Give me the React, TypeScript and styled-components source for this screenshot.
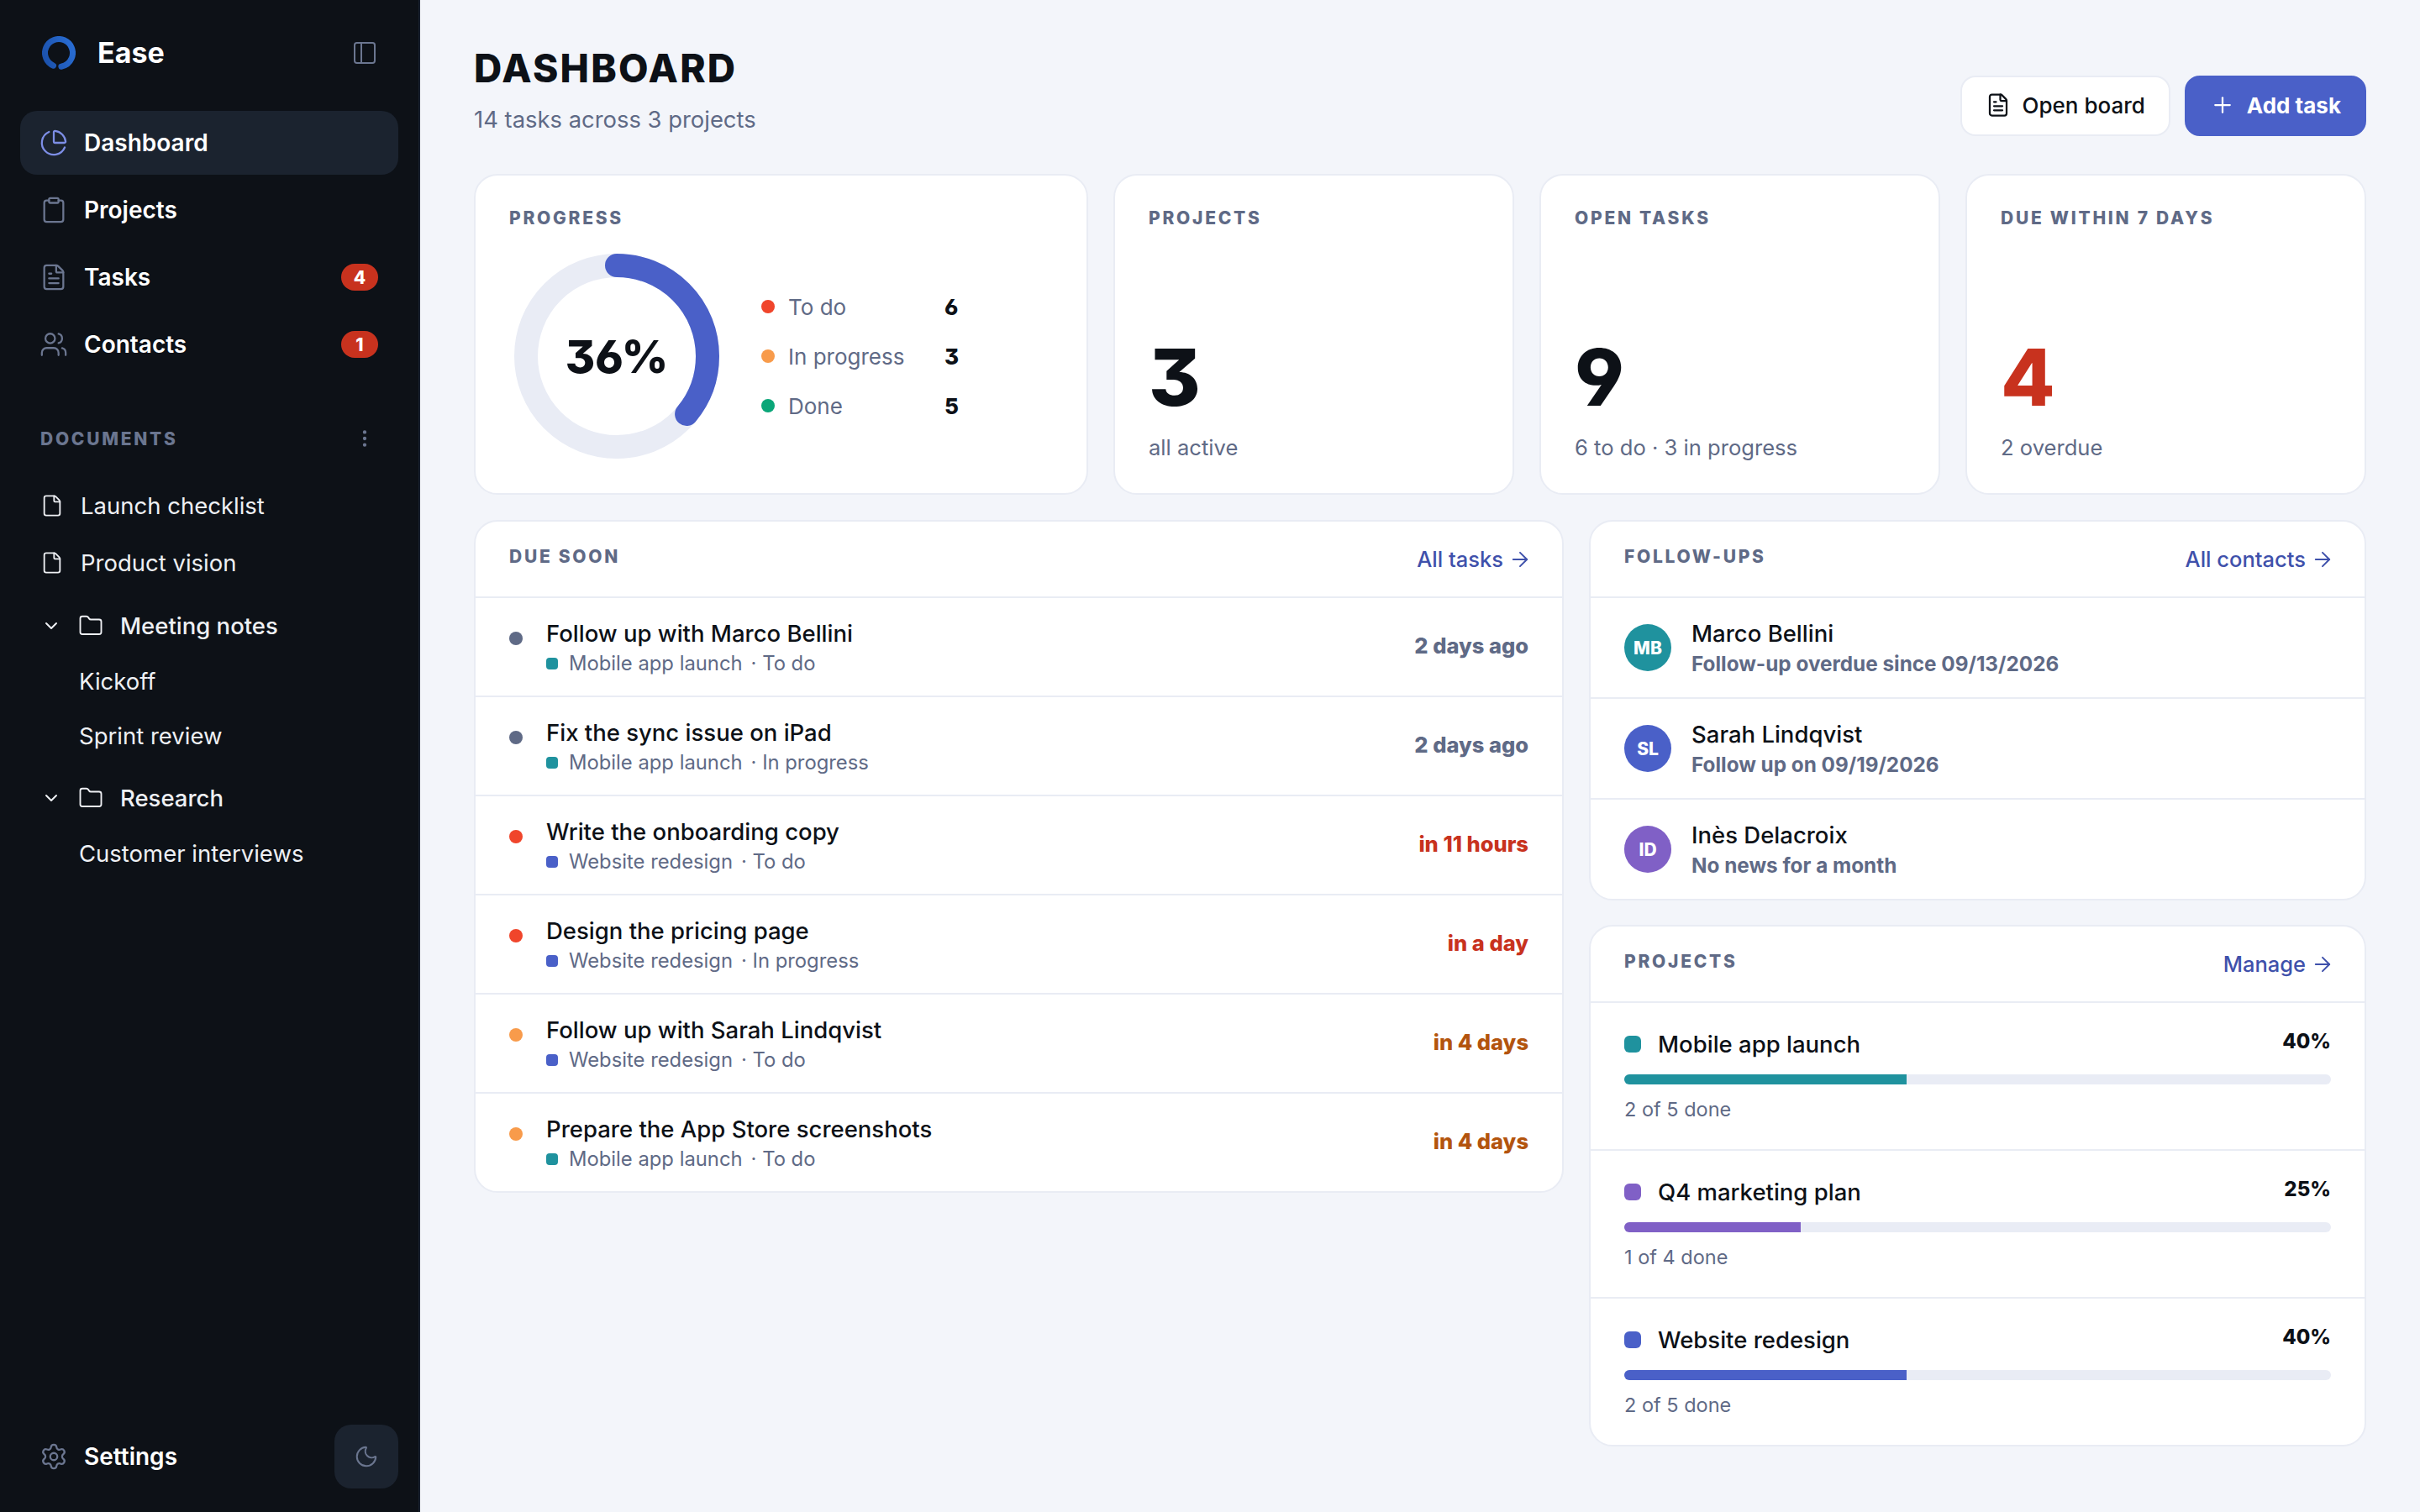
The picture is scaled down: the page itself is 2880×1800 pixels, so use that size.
import styled, { createGlobalStyle } from "styled-components"
import {
    ArrowRight,
    ChartPie,
    ChevronDown,
    Clipboard,
    EllipsisVertical,
    File,
    FileText,
    Folder,
    Moon,
    PanelLeft,
    Plus,
    Settings,
    Users,
} from "lucide-react"

const teal = "#1f929e"
const blue = "#4a60c8"
const purple = "#8060c6"
const red = "#c8321e"
const orange = "#b3540e"
const muted = "#5f6a86"
const ink = "#0d1117"
const line = "#e9ecf4"

const tasks = [
    { title: "Follow up with Marco Bellini", project: "Mobile app launch", color: teal, status: "To do", due: "2 days ago", dot: "#5f6a86", dueColor: muted },
    { title: "Fix the sync issue on iPad", project: "Mobile app launch", color: teal, status: "In progress", due: "2 days ago", dot: "#5f6a86", dueColor: muted },
    { title: "Write the onboarding copy", project: "Website redesign", color: blue, status: "To do", due: "in 11 hours", dot: "#f0452b", dueColor: red },
    { title: "Design the pricing page", project: "Website redesign", color: blue, status: "In progress", due: "in a day", dot: "#f0452b", dueColor: red },
    { title: "Follow up with Sarah Lindqvist", project: "Website redesign", color: blue, status: "To do", due: "in 4 days", dot: "#f89b4b", dueColor: orange },
    { title: "Prepare the App Store screenshots", project: "Mobile app launch", color: teal, status: "To do", due: "in 4 days", dot: "#f89b4b", dueColor: orange },
]

const contacts = [
    { initials: "MB", name: "Marco Bellini", note: "Follow-up overdue since 09/13/2026", color: teal },
    { initials: "SL", name: "Sarah Lindqvist", note: "Follow up on 09/19/2026", color: blue },
    { initials: "ID", name: "Inès Delacroix", note: "No news for a month", color: purple },
]

const projects = [
    { name: "Mobile app launch", pct: 40, done: "2 of 5 done", color: teal },
    { name: "Q4 marketing plan", pct: 25, done: "1 of 4 done", color: purple },
    { name: "Website redesign", pct: 40, done: "2 of 5 done", color: blue },
]

const legend = [
    { label: "To do", value: 6, color: "#f0452b" },
    { label: "In progress", value: 3, color: "#f89b4b" },
    { label: "Done", value: 5, color: "#0aa678" },
]

export default function App() {
    const radius = 108
    const circumference = 2 * Math.PI * radius

    return (
        <Page>
            <GlobalStyle />
            <Sidebar>
                <Brand>
                    <svg width="40" height="40" viewBox="0 0 40 40" fill="none">
                        <defs>
                            <linearGradient id="logoRing" x1="0" y1="0" x2="1" y2="1">
                                <stop offset="0" stopColor="#2a6fd6" />
                                <stop offset="1" stopColor="#1a4fa8" />
                            </linearGradient>
                        </defs>
                        <circle cx="20" cy="20" r="16.5" stroke="url(#logoRing)" strokeWidth="7" strokeLinecap="round" strokeDasharray="93.5 10.2" transform="rotate(113 20 20)" />
                    </svg>
                    <BrandName>Ease</BrandName>
                    <PanelLeft size={32} strokeWidth={1.5} color="#6b7690" />
                </Brand>
                <Nav>
                    <NavItem $active>
                        <ChartPie size={34} strokeWidth={1.6} color="#7d8ee6" />
                        <NavLabel>Dashboard</NavLabel>
                    </NavItem>
                    <NavItem>
                        <Clipboard size={34} strokeWidth={1.6} color="#6b7690" />
                        <NavLabel>Projects</NavLabel>
                    </NavItem>
                    <NavItem>
                        <FileText size={34} strokeWidth={1.6} color="#6b7690" />
                        <NavLabel>Tasks</NavLabel>
                        <Badge>4</Badge>
                    </NavItem>
                    <NavItem>
                        <Users size={34} strokeWidth={1.6} color="#6b7690" />
                        <NavLabel>Contacts</NavLabel>
                        <Badge>1</Badge>
                    </NavItem>
                </Nav>
                <DocsHeader>
                    <DocsTitle>DOCUMENTS</DocsTitle>
                    <EllipsisVertical size={26} strokeWidth={2} color="#6b7690" />
                </DocsHeader>
                <DocList>
                    <DocRow>
                        <File size={28} strokeWidth={1.6} />
                        Launch checklist
                    </DocRow>
                    <DocRow>
                        <File size={28} strokeWidth={1.6} />
                        Product vision
                    </DocRow>
                    <FolderRow>
                        <ChevronDown size={24} strokeWidth={2} />
                        <Folder size={30} strokeWidth={1.5} />
                        Meeting notes
                    </FolderRow>
                    <ChildRow>Kickoff</ChildRow>
                    <ChildRow>Sprint review</ChildRow>
                    <FolderRow>
                        <ChevronDown size={24} strokeWidth={2} />
                        <Folder size={30} strokeWidth={1.5} />
                        Research
                    </FolderRow>
                    <ChildRow>Customer interviews</ChildRow>
                </DocList>
                <SidebarFooter>
                    <SettingsLink>
                        <Settings size={34} strokeWidth={1.6} color="#6b7690" />
                        <NavLabel>Settings</NavLabel>
                    </SettingsLink>
                    <ThemeButton>
                        <Moon size={30} strokeWidth={1.6} color="#6b7690" />
                    </ThemeButton>
                </SidebarFooter>
            </Sidebar>

            <Main>
                <Header>
                    <div>
                        <Title>DASHBOARD</Title>
                        <Subtitle>14 tasks across 3 projects</Subtitle>
                    </div>
                    <Actions>
                        <GhostButton>
                            <FileText size={30} strokeWidth={1.8} />
                            Open board
                        </GhostButton>
                        <PrimaryButton>
                            <Plus size={30} strokeWidth={1.8} />
                            Add task
                        </PrimaryButton>
                    </Actions>
                </Header>

                <StatsGrid>
                    <StatCard>
                        <CardLabel>PROGRESS</CardLabel>
                        <ProgressBody>
                            <RingWrap>
                                <svg width="244" height="244" viewBox="0 0 244 244" fill="none">
                                    <circle cx="122" cy="122" r={radius} stroke="#e9ecf5" strokeWidth="28" />
                                    <circle
                                        cx="122"
                                        cy="122"
                                        r={radius}
                                        stroke={blue}
                                        strokeWidth="28"
                                        strokeLinecap="round"
                                        strokeDasharray={`${circumference * 0.36} ${circumference}`}
                                        transform="rotate(-90 122 122)"
                                    />
                                </svg>
                                <RingValue>36%</RingValue>
                            </RingWrap>
                            <Legend>
                                {legend.map((item) => (
                                    <LegendRow key={item.label}>
                                        <LegendDot $color={item.color} />
                                        <LegendLabel>{item.label}</LegendLabel>
                                        <LegendValue>{item.value}</LegendValue>
                                    </LegendRow>
                                ))}
                            </Legend>
                        </ProgressBody>
                    </StatCard>
                    <StatCard>
                        <CardLabel>PROJECTS</CardLabel>
                        <BigNumber>3</BigNumber>
                        <StatNote>all active</StatNote>
                    </StatCard>
                    <StatCard>
                        <CardLabel>OPEN TASKS</CardLabel>
                        <BigNumber>9</BigNumber>
                        <StatNote>6 to do · 3 in progress</StatNote>
                    </StatCard>
                    <StatCard>
                        <CardLabel>DUE WITHIN 7 DAYS</CardLabel>
                        <BigNumber $color={red}>4</BigNumber>
                        <StatNote>2 overdue</StatNote>
                    </StatCard>
                </StatsGrid>

                <Columns>
                    <Panel>
                        <PanelHeader>
                            <PanelLabel>DUE SOON</PanelLabel>
                            <PanelLink>
                                All tasks <ArrowRight size={28} strokeWidth={1.7} />
                            </PanelLink>
                        </PanelHeader>
                        {tasks.map((task) => (
                            <TaskRow key={task.title}>
                                <TaskDot $color={task.dot} />
                                <TaskText>
                                    <RowTitle>{task.title}</RowTitle>
                                    <TaskMeta>
                                        <ProjectSquare $color={task.color} />
                                        <span>{task.project}</span>
                                        <MetaStatus>· {task.status}</MetaStatus>
                                    </TaskMeta>
                                </TaskText>
                                <DueLabel $color={task.dueColor}>{task.due}</DueLabel>
                            </TaskRow>
                        ))}
                    </Panel>

                    <SideColumn>
                        <Panel>
                            <PanelHeader>
                                <PanelLabel>FOLLOW-UPS</PanelLabel>
                                <PanelLink>
                                    All contacts <ArrowRight size={28} strokeWidth={1.7} />
                                </PanelLink>
                            </PanelHeader>
                            {contacts.map((contact) => (
                                <ContactRow key={contact.name}>
                                    <Avatar $color={contact.color}>{contact.initials}</Avatar>
                                    <ContactText>
                                        <RowTitle>{contact.name}</RowTitle>
                                        <ContactNote>{contact.note}</ContactNote>
                                    </ContactText>
                                </ContactRow>
                            ))}
                        </Panel>
                        <Panel>
                            <PanelHeader>
                                <PanelLabel>PROJECTS</PanelLabel>
                                <PanelLink>
                                    Manage <ArrowRight size={28} strokeWidth={1.7} />
                                </PanelLink>
                            </PanelHeader>
                            {projects.map((project) => (
                                <ProjectRow key={project.name}>
                                    <ProjectTop>
                                        <ProjectDot $color={project.color} />
                                        <RowTitle>{project.name}</RowTitle>
                                        <ProjectPct>{project.pct}%</ProjectPct>
                                    </ProjectTop>
                                    <Track>
                                        <Fill $color={project.color} style={{ width: `${project.pct}%` }} />
                                    </Track>
                                    <ProjectDone>{project.done}</ProjectDone>
                                </ProjectRow>
                            ))}
                        </Panel>
                    </SideColumn>
                </Columns>
            </Main>
        </Page>
    )
}

const GlobalStyle = createGlobalStyle`
    * {
        box-sizing: border-box;
    }
    html, body {
        margin: 0;
        background: #f3f5fa;
    }
    body {
        font-family: Inter, "Liberation Sans", sans-serif;
        color: ${ink};
    }
`

const Page = styled.div`
    display: flex;
    width: 2880px;
    height: 1800px;
    overflow: hidden;
`

const Sidebar = styled.aside`
    width: 500px;
    flex-shrink: 0;
    display: flex;
    flex-direction: column;
    padding: 43px 24px 28px;
    background: #0d1117;
    border-right: 2px solid #1a2230;
    color: #fff;
`

const Brand = styled.div`
    display: flex;
    align-items: center;
    height: 40px;
    padding: 0 24px 0 26px;
    margin-bottom: 49px;
`

const BrandName = styled.div`
    margin-left: 26px;
    margin-right: auto;
    font-size: 34px;
    line-height: 40px;
    font-weight: 700;
`

const Nav = styled.nav`
    display: flex;
    flex-direction: column;
    gap: 4px;
`

const NavItem = styled.div<{ $active?: boolean }>`
    display: flex;
    align-items: center;
    gap: 19px;
    height: 76px;
    padding: 0 24px 0 23px;
    border-radius: 20px;
    background: ${(p) => (p.$active ? "#1b232f" : "transparent")};
`

const NavLabel = styled.span`
    font-size: 28px;
    font-weight: 600;
`

const Badge = styled.span`
    margin-left: auto;
    width: 44px;
    height: 32px;
    display: flex;
    align-items: center;
    justify-content: center;
    border-radius: 16px;
    background: ${red};
    font-size: 21px;
    font-weight: 800;
`

const DocsHeader = styled.div`
    display: flex;
    align-items: center;
    justify-content: space-between;
    height: 30px;
    margin-top: 59px;
    padding: 0 27px 0 24px;
`

const DocsTitle = styled.span`
    font-size: 21px;
    font-weight: 800;
    letter-spacing: 0.13em;
    color: #6b7690;
`

const DocList = styled.div`
    display: flex;
    flex-direction: column;
    margin-top: 31px;
    font-size: 27.5px;
    color: #eef0f4;
`

const DocRow = styled.div`
    display: flex;
    align-items: center;
    gap: 20px;
    height: 68px;
    padding-left: 24px;
`

const FolderRow = styled.div`
    display: flex;
    align-items: center;
    gap: 20px;
    height: 65px;
    margin-top: 10px;
    padding: 0 0 3px 25px;
    font-weight: 500;
`

const ChildRow = styled.div`
    height: 65px;
    line-height: 65px;
    padding-left: 70px;
`

const SidebarFooter = styled.div`
    margin-top: auto;
    display: flex;
    align-items: center;
    justify-content: space-between;
`

const SettingsLink = styled.div`
    display: flex;
    align-items: center;
    gap: 19px;
    padding-left: 23px;
`

const ThemeButton = styled.div`
    width: 76px;
    height: 76px;
    display: flex;
    align-items: center;
    justify-content: center;
    border-radius: 20px;
    background: #1b232f;
`

const Main = styled.main`
    flex: 1;
    min-width: 0;
    padding: 53px 64px 0 64px;
`

const Header = styled.header`
    display: flex;
    align-items: flex-end;
    justify-content: space-between;
    margin-bottom: 45px;
`

const Title = styled.h1`
    margin: 0;
    font-size: 46px;
    line-height: 56px;
    font-weight: 800;
    letter-spacing: 2.2px;
    color: ${ink};
`

const Subtitle = styled.div`
    margin-top: 13px;
    font-size: 27.4px;
    line-height: 40px;
    color: ${muted};
`

const Actions = styled.div`
    display: flex;
    gap: 17px;
`

const GhostButton = styled.button`
    display: flex;
    align-items: center;
    gap: 14px;
    height: 72px;
    padding: 0 28px 2px;
    border: 2px solid ${line};
    border-radius: 18px;
    background: #fff;
    color: ${ink};
    font: 500 26px Inter, sans-serif;
`

const PrimaryButton = styled(GhostButton)`
    border-color: ${blue};
    background: ${blue};
    color: #fff;
    font-weight: 700;
`

const StatsGrid = styled.section`
    display: grid;
    grid-template-columns: 731px repeat(3, 1fr);
    gap: 30px;
    margin-bottom: 30px;
`

const StatCard = styled.div`
    display: flex;
    flex-direction: column;
    height: 382px;
    padding: 36px 40px 35px;
    border: 2px solid ${line};
    border-radius: 28px;
    background: #fff;
`

const CardLabel = styled.div`
    font-size: 21px;
    line-height: 30px;
    font-weight: 800;
    letter-spacing: 0.13em;
    color: ${muted};
`

const PanelLabel = styled(CardLabel)`
    margin-bottom: 5px;
`

const ProgressBody = styled.div`
    display: flex;
    align-items: center;
    gap: 50px;
    margin: 27px 0 0 6px;
`

const RingWrap = styled.div`
    position: relative;
    width: 244px;
    height: 244px;
    flex-shrink: 0;

    svg {
        display: block;
    }
`

const RingValue = styled.div`
    position: absolute;
    inset: 0;
    display: flex;
    align-items: center;
    justify-content: center;
    font-size: 54px;
    font-weight: 800;
    font-feature-settings: "cv09", "cv03", "cv04";
`

const Legend = styled.div`
    display: flex;
    flex-direction: column;
`

const LegendRow = styled.div`
    display: flex;
    align-items: center;
    height: 59px;
`

const LegendDot = styled.span<{ $color: string }>`
    width: 16px;
    height: 16px;
    border-radius: 50%;
    background: ${(p) => p.$color};
`

const LegendLabel = styled.span`
    width: 186px;
    margin-left: 16px;
    font-size: 26px;
    color: ${muted};
`

const LegendValue = styled.span`
    font-size: 26px;
    font-weight: 800;
    font-feature-settings: "cv09", "cv03", "cv04";
`

const BigNumber = styled.div<{ $color?: string }>`
    margin-top: auto;
    margin-bottom: 19px;
    font-size: 94px;
    line-height: 92px;
    font-weight: 800;
    font-feature-settings: "cv09", "cv03", "cv04";
    color: ${(p) => p.$color ?? ink};
`

const StatNote = styled.div`
    font-size: 25.6px;
    line-height: 38px;
    color: ${muted};
`

const Columns = styled.section`
    display: grid;
    grid-template-columns: 1297px 1fr;
    gap: 30px;
    align-items: start;
`

const SideColumn = styled.div`
    display: flex;
    flex-direction: column;
    gap: 29px;
`

const Panel = styled.div`
    border: 2px solid ${line};
    border-radius: 28px;
    background: #fff;
    overflow: hidden;
`

const PanelHeader = styled.div`
    display: flex;
    align-items: center;
    justify-content: space-between;
    height: 89px;
    padding: 0 40px;
`

const PanelLink = styled.span`
    display: flex;
    align-items: center;
    gap: 6px;
    font-size: 25.5px;
    font-weight: 500;
    color: #3f51ab;

    svg {
        margin-right: -4px;
    }
`

const TaskRow = styled.div`
    display: flex;
    align-items: center;
    height: 118px;
    padding: 0 40px;
    border-top: 2px solid ${line};
`

const TaskDot = styled.span<{ $color: string }>`
    align-self: flex-start;
    flex-shrink: 0;
    width: 16px;
    height: 16px;
    margin: 40px 28px 0 0;
    border-radius: 50%;
    background: ${(p) => p.$color};
`

const TaskText = styled.div`
    flex: 1;
    min-width: 0;
    padding-top: 4px;
`

const RowTitle = styled.div`
    font-size: 27.5px;
    line-height: 36px;
    font-weight: 500;
    color: ${ink};
`

const TaskMeta = styled.div`
    display: flex;
    align-items: center;
    font-size: 23.8px;
    line-height: 36px;
    color: ${muted};
`

const ProjectSquare = styled.span<{ $color: string }>`
    width: 14px;
    height: 14px;
    margin-right: 13px;
    border-radius: 4px;
    background: ${(p) => p.$color};
`

const MetaStatus = styled.span`
    margin-left: 10px;
`

const DueLabel = styled.span<{ $color: string }>`
    margin-bottom: 3px;
    font-size: 25.5px;
    font-weight: 800;
    color: ${(p) => p.$color};
`

const ContactRow = styled.div`
    display: flex;
    align-items: center;
    gap: 24px;
    height: 120px;
    padding: 0 40px;
    border-top: 2px solid ${line};
`

const Avatar = styled.div<{ $color: string }>`
    flex-shrink: 0;
    width: 56px;
    height: 56px;
    display: flex;
    align-items: center;
    justify-content: center;
    border-radius: 50%;
    background: ${(p) => p.$color};
    color: #fff;
    font-size: 21px;
    font-weight: 800;
`

const ContactText = styled.div`
    padding-top: 2px;
`

const ContactNote = styled.div`
    font-size: 24.3px;
    line-height: 36px;
    font-weight: 700;
    color: ${muted};
`

const ProjectRow = styled.div`
    height: 176px;
    padding: 31px 40px 0;
    border-top: 2px solid ${line};
`

const ProjectTop = styled.div`
    display: flex;
    align-items: flex-start;
`

const ProjectDot = styled.span<{ $color: string }>`
    width: 20px;
    height: 20px;
    margin: 8px 20px 0 0;
    border-radius: 6px;
    background: ${(p) => p.$color};
`

const ProjectPct = styled.span`
    margin-left: auto;
    font-size: 24px;
    line-height: 30px;
    font-weight: 800;
`

const Track = styled.div`
    height: 12px;
    margin-top: 18px;
    border-radius: 6px;
    background: #e9ecf5;
    overflow: hidden;
`

const Fill = styled.div<{ $color: string }>`
    height: 100%;
    background: ${(p) => p.$color};
`

const ProjectDone = styled.div`
    margin-top: 12px;
    font-size: 23.5px;
    line-height: 36px;
    color: ${muted};
`
